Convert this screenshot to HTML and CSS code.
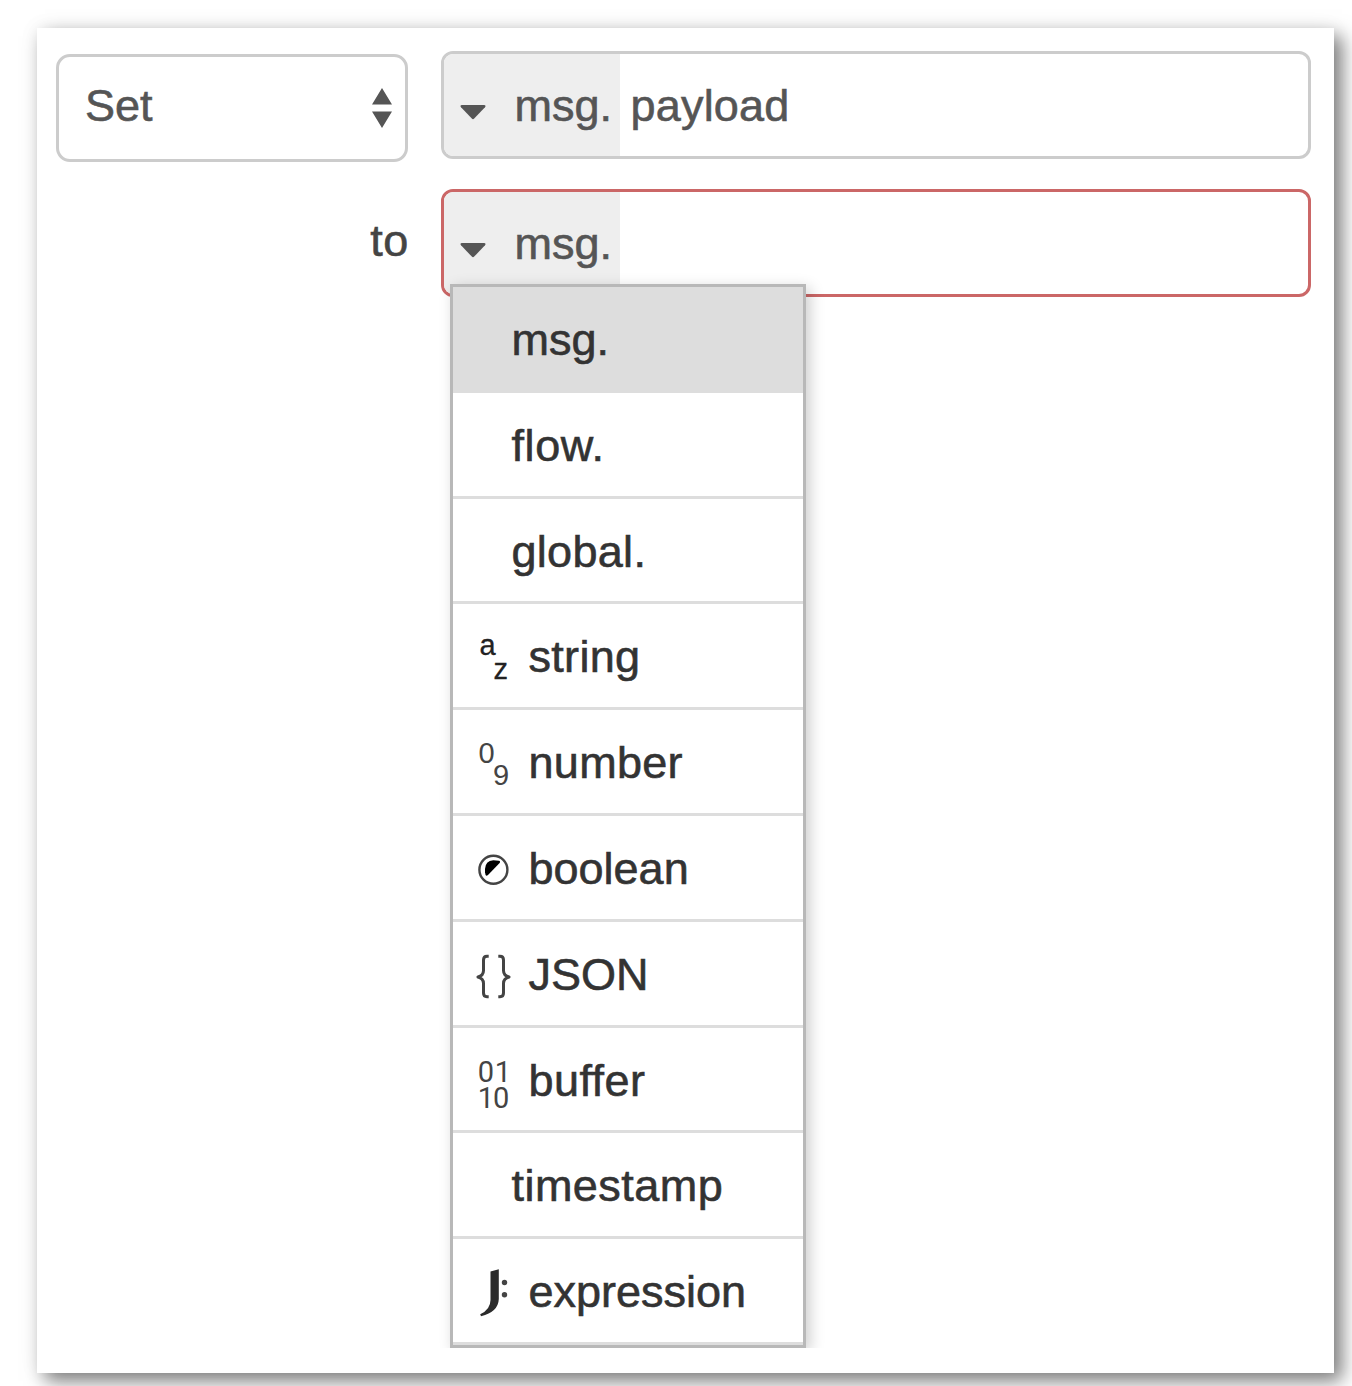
FILE: index.html
```html
<!DOCTYPE html>
<html lang="en">
<head>
<meta charset="utf-8">
<title>Change rule</title>
<link rel="stylesheet" href="styles.css">
</head>
<body>
<main class="panel">
  <div class="rule">
    <div class="select">
      <span class="set">Set</span>
      <svg class="updown" width="20" height="40" viewBox="0 0 20 40"><path d="M10 0 20 16.5H0zM0 23.5H20L10 40z"/></svg>
    </div>
    <div class="field">
      <div class="type">
        <svg class="caret" width="26" height="15" viewBox="0 0 26 15"><path d="M1.6 0H24.4Q26.4.6 25 2.2L14.2 13.6Q13 14.8 11.8 13.6L1 2.2Q-.4.6 1.6 0z"/></svg>
        <span class="w-msg">msg.</span>
      </div>
      <span class="value">payload</span>
    </div>
  </div>
  <div class="rule">
    <label class="to">to</label>
    <div class="field invalid">
      <div class="type">
        <svg class="caret" width="26" height="15" viewBox="0 0 26 15"><path d="M1.6 0H24.4Q26.4.6 25 2.2L14.2 13.6Q13 14.8 11.8 13.6L1 2.2Q-.4.6 1.6 0z"/></svg>
        <span class="w-msg">msg.</span>
      </div>
      <ul class="menu">
        <li class="item plain active"><span class="w-msg">msg.</span></li>
        <li class="item plain"><span class="w-flow">flow.</span></li>
        <li class="item plain"><span class="w-global">global.</span></li>
        <li class="item">
          <svg class="icon" width="40" height="70" viewBox="0 0 40 70"><text class="glyph dark" x="6.5" y="27.5">a</text><text class="glyph dark" x="20.5" y="51.5">z</text></svg>
          <span class="w-string">string</span>
        </li>
        <li class="item">
          <svg class="icon" width="40" height="70" viewBox="0 0 40 70"><text class="glyph" x="5.5" y="30">0</text><text class="glyph" x="20" y="52">9</text></svg>
          <span class="w-number">number</span>
        </li>
        <li class="item">
          <svg class="icon" width="40" height="70" viewBox="0 0 40 70"><circle class="ring" cx="20.4" cy="30.7" r="14"/><path class="fill" d="M12 33.3V30Q12.3 22 20.3 21.3L25.8 21.8Q27.8 22.3 26.6 24L15 36Q13.2 37.4 12.6 36z"/></svg>
          <span class="w-boolean">boolean</span>
        </li>
        <li class="item">
          <svg class="icon" width="40" height="70" viewBox="0 0 40 70"><path class="brace" d="M15.7 11.3H14Q10.5 11.3 10.5 15V25.5Q10.5 30.5 5 32Q10.5 33.5 10.5 38.5V48Q10.5 51.7 14 51.7H15.7M25.3 11.3H27Q30.5 11.3 30.5 15V25.5Q30.5 30.5 36 32Q30.5 33.5 30.5 38.5V48Q30.5 51.7 27 51.7H25.3"/></svg>
          <span class="w-json">JSON</span>
        </li>
        <li class="item">
          <svg class="icon" width="40" height="70" viewBox="0 0 40 70"><text class="glyph bits" x="4.8 21.8" y="30.8">01</text><text class="glyph bits" x="4.8 20" y="57.3">10</text></svg>
          <span class="w-buffer">buffer</span>
        </li>
        <li class="item plain"><span class="w-time">timestamp</span></li>
        <li class="item">
          <svg class="icon" width="40" height="70" viewBox="0 0 40 70"><path class="jay" d="M17.5 9.5 25.8 7.2V37Q25.3 50 8 54.2L7.2 52.2Q17.5 47.5 17.5 38z"/><circle class="dot" cx="31.5" cy="20.5" r="2.7"/><circle class="dot" cx="31.5" cy="32.7" r="2.7"/></svg>
          <span class="w-expr">expression</span>
        </li>
      </ul>
    </div>
  </div>
</main>
</body>
</html>
```
FILE: styles.css
```css
* {
  box-sizing: border-box;
}

body {
  margin: 0;
  height: 1386px;
  padding: 28px 18px 13px 37px;
  overflow: hidden;
  background: #fff;
  font: 45px/52px "Liberation Sans", Arial, sans-serif;
  color: #555;
  -webkit-text-stroke: 0.6px currentColor;
}

.panel {
  height: 1345px;
  padding: 23px 23px 0 19px;
  display: flex;
  flex-direction: column;
  gap: 30px;
  background: #fff;
  box-shadow: 8px 8px 18px rgba(0, 0, 0, 0.5), 0 0 20px rgba(0, 0, 0, 0.06);
}

.rule {
  display: grid;
  grid-template-columns: 352px 870px;
  column-gap: 33px;
  align-items: start;
  height: 108px;
}

.select {
  display: flex;
  justify-content: space-between;
  height: 108px;
  margin-top: 3px;
  padding: 23px 13px 0 26px;
  border: 3px solid #ccc;
  border-radius: 14px;
}

.updown {
  margin-top: 8px;
  fill: #555;
}

.field {
  position: relative;
  display: flex;
  height: 108px;
  border: 3px solid #ccc;
  border-radius: 12px;
}

.invalid {
  border-color: #cb6767;
}

.type {
  display: flex;
  width: 176px;
  padding: 26px 0 0 16px;
  gap: 28.5px;
  background: #eee;
  border-radius: 9px 0 0 9px;
}

.caret {
  flex: none;
  margin-top: 25px;
  fill: #555;
}

.value {
  padding: 26px 0 0 10.5px;
  letter-spacing: 0.2px;
}

.to {
  padding-top: 26px;
  text-align: right;
  color: #444;
  letter-spacing: 0.6px;
  margin-right: -1px;
}

.menu {
  position: absolute;
  z-index: 1;
  left: 6px;
  top: 92px;
  width: 356px;
  margin: 0;
  padding: 0;
  list-style: none;
  background: #fff;
  border: 3px solid #b8b8b8;
  box-shadow: 4px 4px 14px rgba(0, 0, 0, 0.2);
  clip-path: inset(-12px -24px 0 -12px);
  color: #333;
}

.item {
  display: flex;
  height: 105.8px;
  padding: 27px 0 0 20px;
  border-bottom: 3px solid #ddd;
}

.item.plain {
  padding-left: 58.5px;
}

.active {
  background: #ddd;
}

.w-flow {
  letter-spacing: 0.6px;
}

.w-global,
.w-string,
.w-number {
  letter-spacing: 0.3px;
}

.w-buffer,
.w-time {
  letter-spacing: 0.45px;
}

.icon {
  flex: none;
  width: 40px;
  height: 70px;
  margin: -4px 15.5px 0 0;
  overflow: visible;
  -webkit-text-stroke: 0;
}

.glyph {
  font-size: 29px;
  fill: #444;
}

.bits {
  font-family: Roboto, "Liberation Sans", sans-serif;
}

.dark {
  fill: #222;
  stroke: #222;
  stroke-width: 0.3;
}

.ring {
  fill: none;
  stroke: #444;
  stroke-width: 2.4;
}

.fill {
  fill: #000;
}

.brace {
  fill: none;
  stroke: #444;
  stroke-width: 3;
  stroke-linejoin: round;
}

.jay {
  fill: #2b2b2b;
}

.dot {
  fill: #444;
}
```
